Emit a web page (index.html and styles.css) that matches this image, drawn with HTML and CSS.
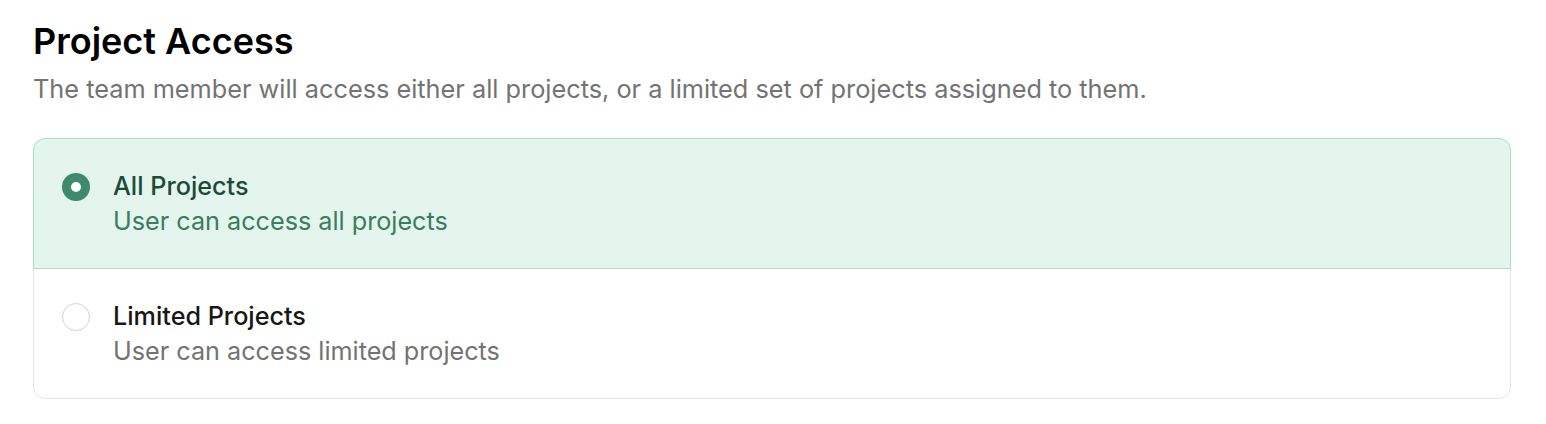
FILE: index.html
```html
<!DOCTYPE html>
<html lang="en">
<head>
<meta charset="utf-8">
<title>Project Access</title>
<link rel="stylesheet" href="styles.css">
</head>
<body>
<section class="page">
  <h1 class="title">Project Access</h1>
  <p class="desc">The team member will access either all projects, or a limited set of projects assigned to them.</p>
  <div class="options" role="radiogroup">
    <div class="option option-checked" role="radio" aria-checked="true">
      <span class="radio radio-on"><span class="dot"></span></span>
      <div class="text">
        <div class="opt-title">All Projects</div>
        <div class="opt-sub">User can access all projects</div>
      </div>
    </div>
    <div class="option option-plain" role="radio" aria-checked="false">
      <span class="radio radio-off"></span>
      <div class="text">
        <div class="opt-title">Limited Projects</div>
        <div class="opt-sub">User can access limited projects</div>
      </div>
    </div>
  </div>
</section>
</body>
</html>
```

FILE: styles.css
```css
* { box-sizing: border-box; }
html, body { margin: 0; padding: 0; background: #ffffff; }
body { font-family: Inter, "Noto Sans", sans-serif; }

.page {
  padding: 19px 35px 0 33px;
}

.title {
  margin: 0;
  font-size: 36px;
  line-height: 44px;
  font-weight: 600;
  color: #000000;
}

.desc {
  margin: 6px 0 0 0;
  font-size: 25.3px;
  line-height: 40px;
  color: #737373;
}

.options {
  margin-top: 29px;
  display: flex;
  flex-direction: column;
}

.option {
  display: flex;
  align-items: flex-start;
  gap: 23px;
  padding: 30px 28px 29px 28px;
  border: 1px solid #e5e5e5;
}

.option-checked {
  background: #e4f5ed;
  border-color: #a8dfc9;
  border-radius: 12px 12px 0 0;
  position: relative;
  z-index: 1;
}

.option-plain {
  margin-top: -1px;
  border-radius: 0 0 12px 12px;
}

.radio {
  flex: none;
  width: 28px;
  height: 28px;
  margin-top: 4px;
  border-radius: 50%;
  display: flex;
  align-items: center;
  justify-content: center;
}

.radio-on { background: #3e8a6b; }
.radio-on .dot {
  width: 10px;
  height: 10px;
  border-radius: 50%;
  background: #ffffff;
}
.radio-off {
  border: 1px solid #d4d4d4;
  background: #ffffff;
}

.text { display: flex; flex-direction: column; }

.opt-title {
  font-size: 25.2px;
  line-height: 35px;
  font-weight: 500;
  color: #171717;
}
.opt-sub {
  font-size: 25.2px;
  line-height: 35px;
  color: #737373;
}

.option-checked .opt-title { color: #1c4b37; }
.option-checked .opt-sub { color: #3a7d5f; }
```
